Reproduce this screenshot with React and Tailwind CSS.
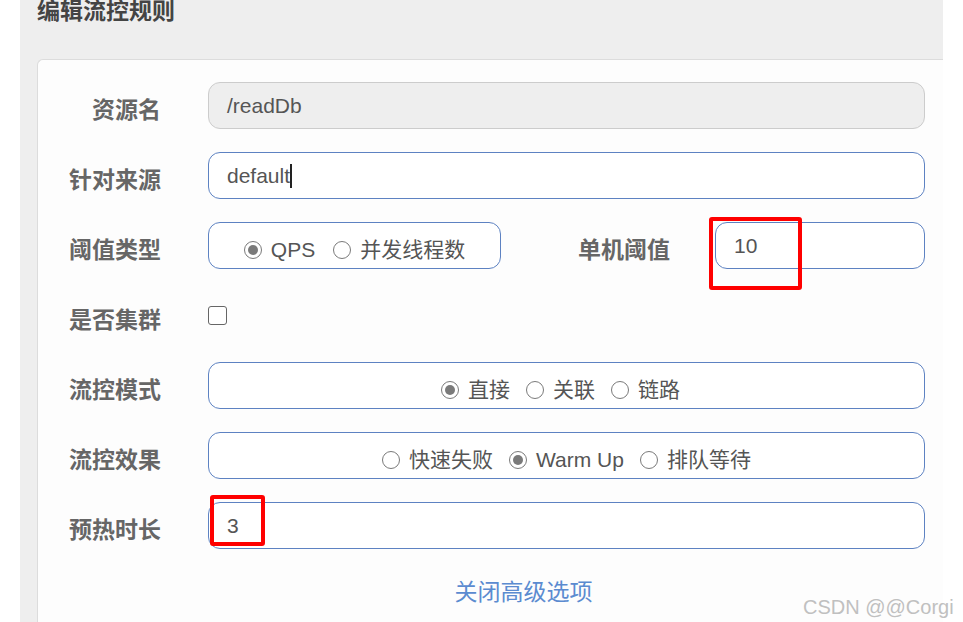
import React from "react";

const font = { fontFamily: '"Liberation Sans", "Noto Sans CJK SC", sans-serif' };

const Radio = ({ checked, label }) => (
  <span className="flex items-center gap-[9px]">
    <span className="flex h-[18px] w-[18px] shrink-0 items-center justify-center rounded-full border-[1.5px] border-[#7a7a7a] bg-white">
      {checked && <span className="h-[10px] w-[10px] rounded-full bg-[#7a7a7a]" />}
    </span>
    <span>{label}</span>
  </span>
);

const Row = ({ label, children }) => (
  <div className="flex h-[47px] items-center">
    <div className="mt-[9px] w-[123px] text-right text-[23px] font-bold text-[#666]">{label}</div>
    <div className="ml-[47px] flex h-full flex-1 items-center">{children}</div>
  </div>
);

export default function App() {
  return (
    <div className="relative h-[622px] w-[963px] overflow-hidden bg-white" style={font}>
      <div className="ml-[20px] h-[622px] w-[923px] bg-[#eeeeee] pl-[17px]">
        <div className="h-[59px] text-[23px] font-bold leading-[22px] text-[#444]">编辑流控规则</div>
        <div className="h-[563px] rounded-tl-[6px] border-l border-t border-[#dcdcdc] bg-[#fdfdfd] pr-[18px] pt-[22px]">
          <div className="flex flex-col gap-[23px]">
            <Row label="资源名">
              <div className="flex h-full w-full items-center rounded-[12px] border border-[#cccccc] bg-[#eeeeee] px-[18px] text-[21px] text-[#555]">
                /readDb
              </div>
            </Row>
            <Row label="针对来源">
              <div className="flex h-full w-full items-center rounded-[12px] border border-[#5d82c2] bg-white px-[18px] text-[21px] text-[#555]">
                default
                <span className="h-[24px] w-[2px] bg-[#222]" />
              </div>
            </Row>
            <Row label="阈值类型">
              <div className="flex h-full w-[293px] items-center justify-center gap-[18px] rounded-[12px] border border-[#5d82c2] bg-white pt-[8px] text-[21px] text-[#555]">
                <Radio checked label="QPS" />
                <Radio label="并发线程数" />
              </div>
              <div className="w-[77px]" />
              <div className="mt-[9px] text-[23px] font-bold text-[#666]">单机阈值</div>
              <div className="relative ml-[45px] flex h-full flex-1 items-center rounded-[12px] border border-[#5d82c2] bg-white px-[18px] text-[21px] text-[#555]">
                10
                <div className="absolute left-[-7px] top-[-6px] h-[73px] w-[93px] rounded-[3px] border-[4px] border-[#ff0000]" />
              </div>
            </Row>
            <Row label="是否集群">
              <div className="h-[19px] w-[19px] rounded-[3px] border-[1.5px] border-[#666] bg-white" />
            </Row>
            <Row label="流控模式">
              <div className="flex h-full w-full items-center justify-center gap-[16px] rounded-[12px] border border-[#5d82c2] bg-white pr-[12px] pt-[8px] text-[21px] text-[#555]">
                <Radio checked label="直接" />
                <Radio label="关联" />
                <Radio label="链路" />
              </div>
            </Row>
            <Row label="流控效果">
              <div className="flex h-full w-full items-center justify-center gap-[16px] rounded-[12px] border border-[#5d82c2] bg-white pt-[8px] text-[21px] text-[#555]">
                <Radio label="快速失败" />
                <Radio checked label="Warm Up" />
                <Radio label="排队等待" />
              </div>
            </Row>
            <Row label="预热时长">
              <div className="relative flex h-full w-full items-center rounded-[12px] border border-[#5d82c2] bg-white px-[18px] text-[21px] text-[#555]">
                3
                <div className="absolute left-[1px] top-[-8px] h-[51px] w-[55px] rounded-[3px] border-[4px] border-[#ff0000]" />
              </div>
            </Row>
          </div>
          <div className="mt-[26px] pl-[84px] text-center text-[23px] text-[#5b8bd0]">关闭高级选项</div>
        </div>
      </div>
      <div className="absolute left-[803px] top-[592px] text-[20px] text-[#c0c0c0]">CSDN @@Corgi</div>
    </div>
  );
}
